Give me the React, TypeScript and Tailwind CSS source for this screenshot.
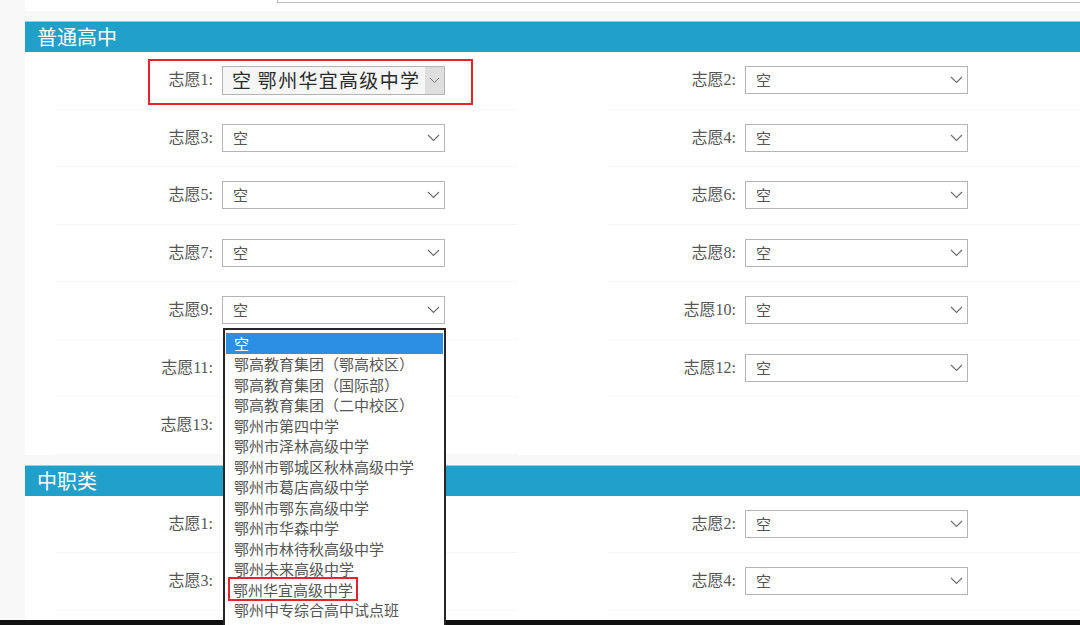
import React from "react";

const LABEL_FONT = { fontFamily: '"Liberation Serif", "Noto Sans CJK SC", serif' };
const CJK = { fontFamily: '"Noto Sans CJK SC", "Liberation Sans", sans-serif' };

function Chevron() {
  return (
    <svg width="13" height="8" viewBox="0 0 13 8" className="shrink-0">
      <path d="M1 1 L6.5 6.5 L12 1" fill="none" stroke="#6b6b6b" strokeWidth="1.1" />
    </svg>
  );
}

function Select({ highlighted }: { highlighted?: boolean }) {
  if (highlighted) {
    return (
      <div className="flex h-[29px] w-[223px] items-stretch border border-[#b4b4b4] bg-[#f6f6f6]">
        <div
          className="flex flex-1 items-center pl-[9px] text-[19px] tracking-[1.3px] text-[#2a2a2a]"
          style={CJK}
        >
          空 鄂州华宜高级中学
        </div>
        <div className="flex w-[19px] items-center justify-center bg-[#dedede]">
          <svg width="11" height="7" viewBox="0 0 11 7">
            <path d="M1 1 L5.5 5.5 L10 1" fill="none" stroke="#7a7a7a" strokeWidth="1" />
          </svg>
        </div>
      </div>
    );
  }
  return (
    <div className="flex h-[28px] w-[223px] items-center justify-between border border-[#b4b4b4] bg-white pl-[10px] pr-[4px]">
      <span className="text-[15px] text-[#555]" style={CJK}>
        空
      </span>
      <Chevron />
    </div>
  );
}

function Cell({
  n,
  right,
  hideSelect,
  highlighted,
}: {
  n: number;
  right?: boolean;
  hideSelect?: boolean;
  highlighted?: boolean;
}) {
  return (
    <div
      className={
        "relative flex h-[57.5px] items-center border-b border-[#f6f6f6] " +
        (right ? "ml-[60px]" : "ml-[30px] mr-[30px]")
      }
    >
      <div className={"flex items-center " + (right ? "ml-[-60px]" : "ml-[-30px]")}>
        <div className="w-[190px] pr-[2px] text-right text-[16px] text-[#555]" style={LABEL_FONT}>
          志愿{n}:
        </div>
        <div className="ml-[7px]">
          {hideSelect ? <div className="h-[28px] w-[223px]" /> : <Select highlighted={highlighted} />}
        </div>
      </div>
      {highlighted && (
        <div className="pointer-events-none absolute left-[93px] top-[7px] h-[46px] w-[325px] border-2 border-[#e5232c]" />
      )}
    </div>
  );
}

function Header({ title }: { title: string }) {
  return (
    <div className="flex h-[31px] items-center border-t border-[#86d3ec] bg-[#21a0c9] pl-[12px]">
      <span className="text-[20px] leading-none text-white" style={CJK}>
        {title}
      </span>
    </div>
  );
}

const OPTIONS = [
  "空",
  "鄂高教育集团（鄂高校区）",
  "鄂高教育集团（国际部）",
  "鄂高教育集团（二中校区）",
  "鄂州市第四中学",
  "鄂州市泽林高级中学",
  "鄂州市鄂城区秋林高级中学",
  "鄂州市葛店高级中学",
  "鄂州市鄂东高级中学",
  "鄂州市华森中学",
  "鄂州市林待秋高级中学",
  "鄂州未来高级中学",
  "鄂州华宜高级中学",
  "鄂州中专综合高中试点班",
];

function Dropdown() {
  return (
    <div className="absolute left-[223px] top-[328px] h-[297px] w-[223px] border-2 border-b-0 border-[#262626] bg-white pt-[3px]">
      {OPTIONS.map((o, i) => (
        <div
          key={o}
          className={
            "flex h-[20.5px] items-center text-[15px] leading-none " +
            (i === 0 ? "mx-[1px] bg-[#2d8fe3] pl-[8px] text-white" : "pl-[9px] text-[#555]")
          }
          style={CJK}
        >
          {i === 12 ? (
            <span className="-ml-[6px] flex h-[24px] items-center border-2 border-[#e5232c] px-[3px]">{o}</span>
          ) : (
            o
          )}
        </div>
      ))}
    </div>
  );
}

export default function App() {
  const sec1: { l: number; r?: number; hl?: boolean; hide?: boolean }[] = [
    { l: 1, r: 2, hl: true },
    { l: 3, r: 4 },
    { l: 5, r: 6 },
    { l: 7, r: 8 },
    { l: 9, r: 10 },
    { l: 11, r: 12, hide: true },
    { l: 13, hide: true },
  ];
  const sec2 = [
    { l: 1, r: 2 },
    { l: 3, r: 4 },
  ];
  return (
    <div className="relative flex h-[625px] w-[1080px] flex-col overflow-hidden bg-[#f8f8f8]">
      <div className="h-[620px] overflow-hidden">
        <div className="ml-[25px] h-[11px] bg-white">
          <div className="ml-[252px] h-[3px] border-b border-l border-[#bdbdbd]" />
        </div>
        <div className="h-[10px]" />
        <div className="ml-[25px] bg-white">
          <Header title="普通高中" />
          <div className="grid grid-cols-[523px_1fr]">
            {sec1.map((row) => (
              <React.Fragment key={row.l}>
                <Cell n={row.l} hideSelect={row.hide} highlighted={row.hl} />
                {row.r ? <Cell n={row.r} right /> : <div className="h-[57.5px]" />}
              </React.Fragment>
            ))}
          </div>
        </div>
        <div className="h-[10px]" />
        <div className="ml-[25px] bg-white pb-[30px]">
          <Header title="中职类" />
          <div className="grid grid-cols-[523px_1fr]">
            {sec2.map((row) => (
              <React.Fragment key={row.l}>
                <Cell n={row.l} hideSelect />
                <Cell n={row.r} right />
              </React.Fragment>
            ))}
          </div>
        </div>
      </div>
      <div className="h-[5px] bg-[#111]" />
      <Dropdown />
    </div>
  );
}
